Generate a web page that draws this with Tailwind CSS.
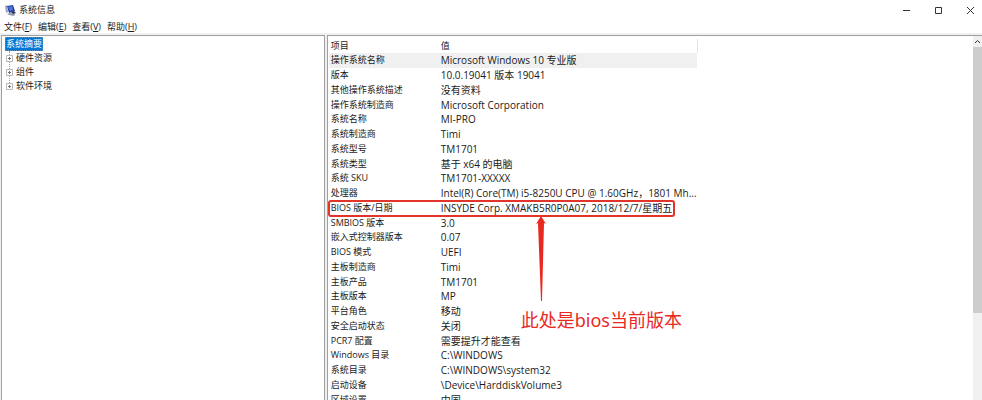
<!DOCTYPE html>
<html lang="zh-CN">
<head>
    <meta charset="UTF-8">
    <meta name="viewport" content="width=device-width, initial-scale=1.0">
    <title>系统信息</title>
    <script src="https://cdn.jsdelivr.net/npm/@tailwindcss/browser@4"></script>
    <style>
        body {
            font-family: 'Open Sans', 'Noto Sans CJK SC', sans-serif;
        }
    </style>
</head>
<body class="h-screen flex flex-col overflow-hidden bg-white text-[9px] leading-[14px] text-[#1a1a1a]">
    <!-- Title bar -->
    <header class="flex items-center h-5 pl-[5px] shrink-0">
        <svg class="w-[11px] h-[11px]" viewBox="0 0 11 11">
            <path d="M0 1l2-1 1 7-2 1z" fill="#9aa5c0"/>
            <path d="M2 1l6-1 2 6-6 2z" fill="#2a3f9d"/>
            <path d="M3 2l4-1 1 4-3 1z" fill="#4b74e0"/>
            <path d="M2 9l3-1 5 1-1 2-5-1z" fill="#8f97ad"/>
            <path d="M6 7l3-1 2 2-3 1z" fill="#2b3350"/>
        </svg>
        <h1 class="ml-[3px]">系统信息</h1>
        <div class="ml-auto -mr-1 flex items-center">
            <button type="button" aria-label="最小化" class="w-8 h-5 flex items-center justify-center">
                <svg class="w-[9px] h-[9px]" viewBox="0 0 9 9"><path d="M1 4.500h7" stroke="#333" fill="none"/></svg>
            </button>
            <button type="button" aria-label="最大化" class="w-8 h-5 flex items-center justify-center">
                <svg class="w-[9px] h-[9px]" viewBox="0 0 9 9"><path d="M1.500 1.500h6v6h-6z" stroke="#333" fill="none"/></svg>
            </button>
            <button type="button" aria-label="关闭" class="w-8 h-5 flex items-center justify-center">
                <svg class="w-[9px] h-[9px]" viewBox="0 0 9 9"><path d="M1 1l7 7M8 1l-7 7" stroke="#333" fill="none"/></svg>
            </button>
        </div>
    </header>

    <!-- Menu bar -->
    <nav class="flex items-center gap-1.5 h-[13px] pl-1 shrink-0">
        <button type="button">文件(<u>F</u>)</button>
        <button type="button">编辑(<u>E</u>)</button>
        <button type="button">查看(<u>V</u>)</button>
        <button type="button">帮助(<u>H</u>)</button>
    </nav>

    <main class="flex flex-1 min-h-0 gap-[2px] pt-[2px] pl-px bg-[#f0f0f0]">
        <!-- Category tree -->
        <aside class="w-[33%] shrink-0 border border-b-0 border-[#a0a0a0] bg-white pl-[3px] pt-px">
            <button type="button" class="block h-[14px] px-px bg-[#0078d7] text-white outline-1 -outline-offset-1 outline-dotted outline-[#5c8fb8]">系统摘要</button>
            <ul class="relative pl-px">
                <li class="absolute left-[4px] top-0 h-9 border-l border-dotted border-[#a0a0a0]" aria-hidden="true"></li>
                <li class="relative flex items-center gap-[3px] h-[14px]">
                    <svg class="w-[7px] h-[7px]" viewBox="0 0 7 7"><path d="M.5.5h6v6h-6z" fill="#fff" stroke="#b8b8b8"/><path d="M2 3.500h3M3.500 2v3" stroke="#777"/></svg>
                    <button type="button">硬件资源</button>
                </li>
                <li class="relative flex items-center gap-[3px] h-[14px]">
                    <svg class="w-[7px] h-[7px]" viewBox="0 0 7 7"><path d="M.5.5h6v6h-6z" fill="#fff" stroke="#b8b8b8"/><path d="M2 3.500h3M3.500 2v3" stroke="#777"/></svg>
                    <button type="button">组件</button>
                </li>
                <li class="relative flex items-center gap-[3px] h-[14px]">
                    <svg class="w-[7px] h-[7px]" viewBox="0 0 7 7"><path d="M.5.5h6v6h-6z" fill="#fff" stroke="#b8b8b8"/><path d="M2 3.500h3M3.500 2v3" stroke="#777"/></svg>
                    <button type="button">软件环境</button>
                </li>
            </ul>
        </aside>

        <!-- System summary -->
        <section class="relative flex-1 min-w-0 flex items-stretch border-l border-t border-[#a0a0a0] bg-white">
            <div class="flex-1 min-w-0 pt-[3px] pl-px">
                <table class="w-[369px] h-[368px] table-fixed border-collapse text-left whitespace-nowrap">
                    <thead>
                        <tr>
                            <th class="w-[110px] p-0 pl-[2px] font-normal">项目</th>
                            <th class="p-0 pl-[2px] font-normal border-r border-[#e5e5e5]">值</th>
                        </tr>
                    </thead>
                    <tbody id="summary"></tbody>
                </table>
            </div>

            <div class="w-[9px] shrink-0 flex flex-col bg-[#f0f0f0]">
                <button type="button" aria-label="向上滚动" class="h-[11px] flex items-center justify-center">
                    <svg class="w-[7px] h-[5px]" viewBox="0 0 7 5"><path d="M1 4l2.500-2.500L6 4" stroke="#333" fill="none"/></svg>
                </button>
                <div class="h-[73%] bg-[#cdcdcd]"></div>
            </div>

            <!-- Annotation -->
            <div class="absolute left-0 top-[164px] w-[347px] h-[17px] border-2 border-[#e3342b] rounded-[3px]"></div>
            <svg class="absolute left-[208px] top-[180px] w-[10px] h-[85px]" viewBox="0 0 10 85">
                <path d="M5 0l5 8-2-1-2 78H5L2 7 0 8z" fill="#e8291f"/>
            </svg>
            <p class="absolute left-[193px] top-[272px] text-[18px] leading-6 text-[#e8291f] whitespace-nowrap font-['Noto_Sans','Noto_Sans_CJK_SC',sans-serif]">此处是bios当前版本</p>
        </section>
    </main>

    <script>
        const rows = [
            ['操作系统名称', 'Microsoft Windows 10 专业版'],
            ['版本', '10.0.19041 版本 19041'],
            ['其他操作系统描述', '没有资料'],
            ['操作系统制造商', 'Microsoft Corporation'],
            ['系统名称', 'MI-PRO'],
            ['系统制造商', 'Timi'],
            ['系统型号', 'TM1701'],
            ['系统类型', '基于 x64 的电脑'],
            ['系统 SKU', 'TM1701-XXXXX'],
            ['处理器', 'Intel(R) Core(TM) i5-8250U CPU @ 1.60GHz，1801 Mh...'],
            ['BIOS 版本/日期', 'INSYDE Corp. XMAKB5R0P0A07, 2018/12/7/星期五'],
            ['SMBIOS 版本', '3.0'],
            ['嵌入式控制器版本', '0.07'],
            ['BIOS 模式', 'UEFI'],
            ['主板制造商', 'Timi'],
            ['主板产品', 'TM1701'],
            ['主板版本', 'MP'],
            ['平台角色', '移动'],
            ['安全启动状态', '关闭'],
            ['PCR7 配置', '需要提升才能查看'],
            ['Windows 目录', 'C:\\WINDOWS'],
            ['系统目录', 'C:\\WINDOWS\\system32'],
            ['启动设备', '\\Device\\HarddiskVolume3'],
            ['区域设置', '中国'],
        ];

        document.getElementById('summary').innerHTML = rows.map(([item, value], i) => `
            <tr class="${i === 0 ? 'bg-[#f0f0f0]' : ''}">
                <td class="p-0 pl-[2px]">${item}</td>
                <td class="p-0 pl-[2px] text-[10px]">${value}</td>
            </tr>
        `).join('');
    </script>
</body>
</html>
